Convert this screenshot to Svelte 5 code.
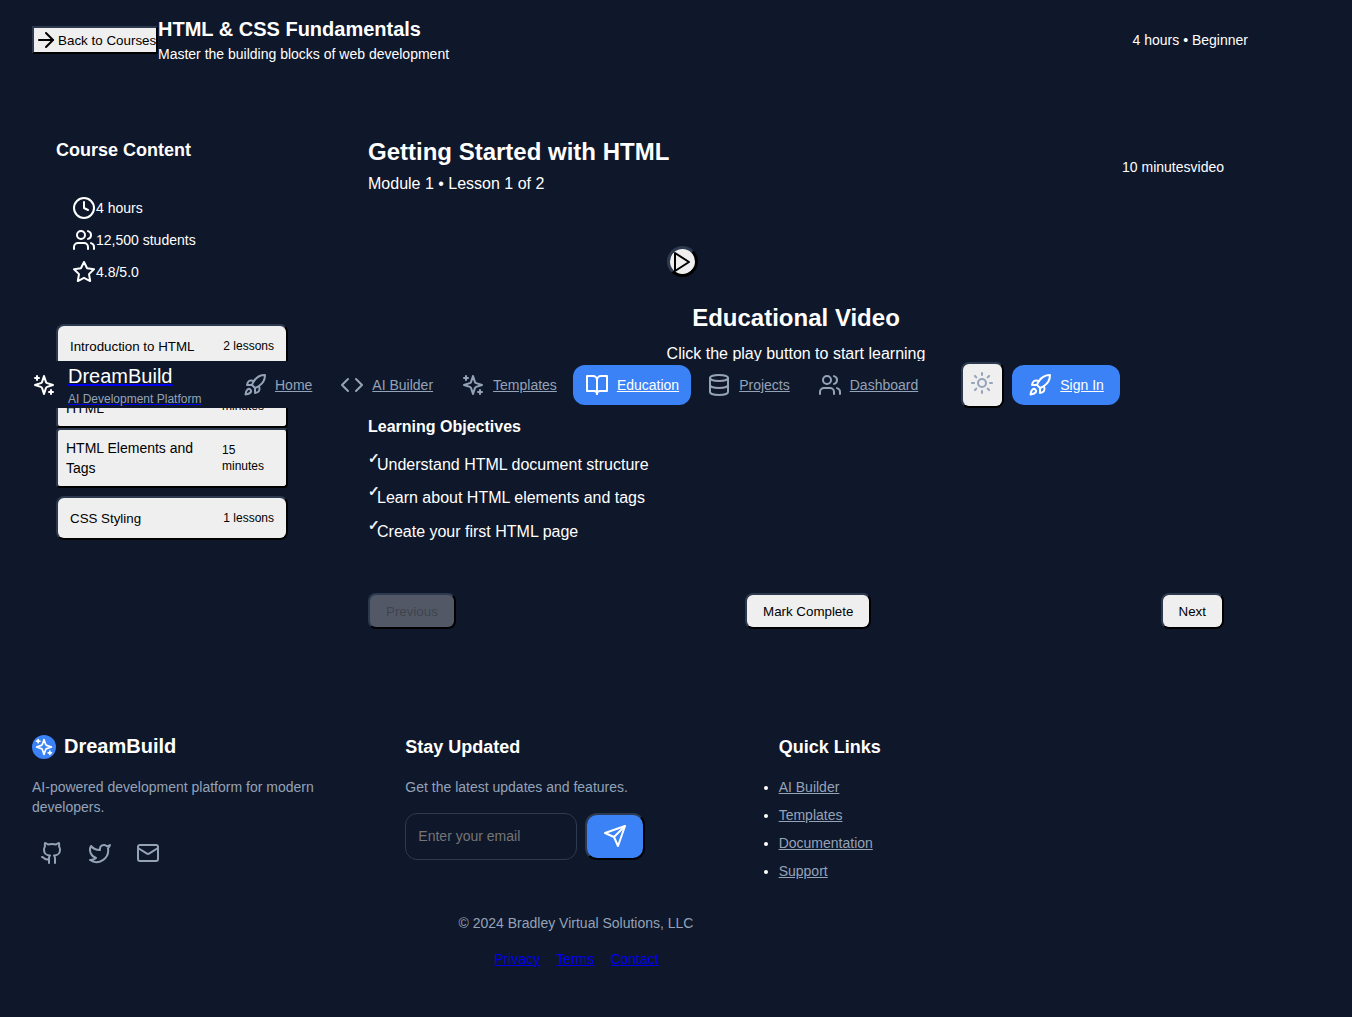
<script>
  const icons = {
    arrow: '<path d="M5 12h14"/><path d="m12 5 7 7-7 7"/>',
    clock: '<circle cx="12" cy="12" r="10"/><polyline points="12 6 12 12 16 14"/>',
    users: '<path d="M16 21v-2a4 4 0 0 0-4-4H6a4 4 0 0 0-4 4v2"/><circle cx="9" cy="7" r="4"/><path d="M22 21v-2a4 4 0 0 0-3-3.87"/><path d="M16 3.13a4 4 0 0 1 0 7.75"/>',
    star: '<polygon points="12 2 15.09 8.26 22 9.27 17 14.14 18.18 21.02 12 17.77 5.82 21.02 7 14.14 2 9.27 8.91 8.26 12 2"/>',
    sparkles: '<path d="m12 3-1.912 5.813a2 2 0 0 1-1.275 1.275L3 12l5.813 1.912a2 2 0 0 1 1.275 1.275L12 21l1.912-5.813a2 2 0 0 1 1.275-1.275L21 12l-5.813-1.912a2 2 0 0 1-1.275-1.275L12 3Z"/><path d="M5 3v4"/><path d="M19 17v4"/><path d="M3 5h4"/><path d="M17 19h4"/>',
    rocket: '<path d="M4.5 16.5c-1.5 1.26-2 5-2 5s3.74-.5 5-2c.71-.84.7-2.13-.09-2.91a2.18 2.18 0 0 0-2.91-.09z"/><path d="m12 15-3-3a22 22 0 0 1 2-3.95A12.88 12.88 0 0 1 22 2c0 2.72-.78 7.5-6 11a22.35 22.35 0 0 1-4 2z"/><path d="M9 12H4s.55-3.03 2-4c1.62-1.08 5 0 5 0"/><path d="M12 15v5s3.03-.55 4-2c1.08-1.62 0-5 0-5"/>',
    code: '<polyline points="16 18 22 12 16 6"/><polyline points="8 6 2 12 8 18"/>',
    book: '<path d="M2 3h6a4 4 0 0 1 4 4v14a3 3 0 0 0-3-3H2z"/><path d="M22 3h-6a4 4 0 0 0-4 4v14a3 3 0 0 1 3-3h7z"/>',
    database: '<ellipse cx="12" cy="5" rx="9" ry="3"/><path d="M3 5V19A9 3 0 0 0 21 19V5"/><path d="M3 12A9 3 0 0 0 21 12"/>',
    sun: '<circle cx="12" cy="12" r="4"/><path d="M12 2v2"/><path d="M12 20v2"/><path d="m4.93 4.93 1.41 1.41"/><path d="m17.66 17.66 1.41 1.41"/><path d="M2 12h2"/><path d="M20 12h2"/><path d="m6.34 17.66-1.41 1.41"/><path d="m19.07 4.93-1.41 1.41"/>',
    github: '<path d="M15 22v-4a4.8 4.8 0 0 0-1-3.5c3 0 6-2 6-5.5.08-1.25-.27-2.48-1-3.5.28-1.15.28-2.35 0-3.5 0 0-1 0-3 1.5-2.64-.5-5.36-.5-8 0C6 2 5 2 5 2c-.3 1.15-.3 2.35 0 3.5A5.403 5.403 0 0 0 4 9c0 3.5 3 5.5 6 5.5-.39.49-.68 1.05-.85 1.65-.17.6-.22 1.23-.15 1.85v4"/><path d="M9 18c-4.51 2-5-2-7-2"/>',
    twitter: '<path d="M22 4s-.7 2.1-2 3.4c1.6 10-9.4 17.3-18 11.6 2.2.1 4.4-.6 6-2C3 15.5.5 9.6 3 5c2.2 2.6 5.6 4.1 9 4-.9-4.2 4-6.6 7-3.8 1.1 0 3-1.2 3-1.2z"/>',
    mail: '<rect x="2" y="4" width="20" height="16" rx="2"/><path d="m22 7-8.97 5.7a1.94 1.94 0 0 1-2.06 0L2 7"/>',
    send: '<path d="m22 2-7 20-4-9-9-4Z"/><path d="M22 2 11 13"/>',
    play: '<polygon points="5 3 19 12 5 21 5 3"/>'
  };
  const stats = [
    { icon: 'clock', text: '4 hours' },
    { icon: 'users', text: '12,500 students' },
    { icon: 'star', text: '4.8/5.0' }
  ];
  const navItems = [
    { icon: 'rocket', label: 'Home' },
    { icon: 'code', label: 'AI Builder' },
    { icon: 'sparkles', label: 'Templates' },
    { icon: 'book', label: 'Education', active: true },
    { icon: 'database', label: 'Projects' },
    { icon: 'users', label: 'Dashboard' }
  ];
  const objectives = ['Understand HTML document structure', 'Learn about HTML elements and tags', 'Create your first HTML page'];
  const quick = ['AI Builder', 'Templates', 'Documentation', 'Support'];
</script>

{#snippet icon(name, size = 24)}
  <svg class="ico" width={size} height={size} viewBox="0 0 24 24" fill="none" stroke="currentColor" stroke-width="2" stroke-linecap="round" stroke-linejoin="round">{@html icons[name]}</svg>
{/snippet}

<div class="page">
  <header class="top">
    <button class="btn-plain back">{@render icon('arrow')}<span>Back to Courses</span></button>
    <div class="top-title">
      <h1>HTML &amp; CSS Fundamentals</h1>
      <p>Master the building blocks of web development</p>
    </div>
    <span class="top-meta">4 hours • Beginner</span>
  </header>

  <main class="layout">
    <aside class="side">
      <h2>Course Content</h2>
      <ul class="stats">
        {#each stats as s}
          <li>{@render icon(s.icon)}<span>{s.text}</span></li>
        {/each}
      </ul>
      <div class="modules">
        <div class="module-group">
          <button class="btn-plain module"><span>Introduction to HTML</span><small>2 lessons</small></button>
          <button class="btn-plain lesson"><span class="l-title">Getting Started with HTML</span><small class="l-dur">10 minutes</small></button>
          <button class="btn-plain lesson"><span class="l-title">HTML Elements and Tags</span><small class="l-dur">15 minutes</small></button>
        </div>
        <button class="btn-plain module"><span>CSS Styling</span><small>1 lessons</small></button>
      </div>
    </aside>

    <section class="content">
      <div class="lesson-head">
        <div>
          <h2>Getting Started with HTML</h2>
          <p>Module 1 • Lesson 1 of 2</p>
        </div>
        <span class="lesson-meta">10 minutesvideo</span>
      </div>

      <div class="video">
        <button class="btn-plain play" aria-label="Play">{@render icon('play')}</button>
        <h3>Educational Video</h3>
        <p>Click the play button to start learning</p>
      </div>

      <h4>Learning Objectives</h4>
      <ul class="objectives">
        {#each objectives as o}
          <li><span class="tick">✓</span><span>{o}</span></li>
        {/each}
      </ul>

      <div class="pager">
        <button class="btn-plain pg" disabled>Previous</button>
        <button class="btn-plain pg">Mark Complete</button>
        <button class="btn-plain pg">Next</button>
      </div>
    </section>
  </main>

  <footer class="foot">
    <div class="foot-grid">
      <div>
        <div class="brand">
          <span class="brand-dot">{@render icon('sparkles', 20)}</span>
          <span class="brand-name">DreamBuild</span>
        </div>
        <p class="muted desc">AI-powered development platform for modern developers.</p>
        <div class="social">
          <span>{@render icon('github')}</span>
          <span>{@render icon('twitter')}</span>
          <span>{@render icon('mail')}</span>
        </div>
      </div>
      <div>
        <h5>Stay Updated</h5>
        <p class="muted news">Get the latest updates and features.</p>
        <form class="sub">
          <input type="email" placeholder="Enter your email" />
          <button class="btn-plain send" type="button" aria-label="Send">{@render icon('send')}</button>
        </form>
      </div>
      <div>
        <h5>Quick Links</h5>
        <ul class="quick">
          {#each quick as q}
            <li><a href="#top">{q}</a></li>
          {/each}
        </ul>
      </div>
    </div>
    <div class="legal">
      <p class="muted">© 2024 Bradley Virtual Solutions, LLC</p>
      <div class="legal-links">
        <a href="#top">Privacy</a>
        <a href="#top">Terms</a>
        <a href="#top">Contact</a>
      </div>
    </div>
  </footer>

  <nav class="nav">
    <div class="nav-brand">
      <span class="nav-star">{@render icon('sparkles')}</span>
      <a class="nav-logo" href="#top">
        <span class="nav-name">DreamBuild</span>
        <span class="nav-tag">AI Development Platform</span>
      </a>
    </div>
    <div class="nav-links">
      {#each navItems as n}
        <div class="nav-item" class:active={n.active}>
          {@render icon(n.icon)}
          <a href="#top">{n.label}</a>
        </div>
      {/each}
    </div>
    <div class="nav-actions">
      <button class="btn-plain theme" aria-label="Theme">{@render icon('sun')}</button>
      <div class="nav-item active signin">{@render icon('rocket')}<a href="#top">Sign In</a></div>
    </div>
  </nav>
</div>

<style>
  :global(body) {
    margin: 0;
    background: #0f172a;
  }
  .page {
    position: relative;
    height: 1017px;
    overflow: hidden;
    background: #0f172a;
    color: #fff;
    font-family: "Liberation Sans", Arial, sans-serif;
    font-size: 14px;
    line-height: 20px;
  }
  h1, h2, h3, h4, h5, p, ul { margin: 0; padding: 0; }
  ul { list-style: none; }
  .ico { display: block; flex: none; }

  .btn-plain {
    box-sizing: border-box;
    font-family: inherit;
    color: #000;
    background: #efefef;
    border-width: 2px;
    border-style: solid;
    border-color: #2c394e #000 #000 #2c394e;
    padding: 0;
  }

  .top {
    display: flex;
    align-items: flex-start;
    padding: 15px 104px 0 32px;
    height: 96px;
    box-sizing: border-box;
  }
  .back {
    display: flex;
    align-items: center;
    gap: 0;
    height: 28px;
    width: 126px;
    margin-top: 11px;
    font-size: 13.4px;
    white-space: nowrap;
  }
  .top-title h1 { font-size: 20px; line-height: 28px; }
  .top-title p { font-size: 14px; line-height: 22px; }
  .top-meta { margin-left: auto; margin-top: 15px; }

  .layout {
    display: grid;
    grid-template-columns: 280px 904px;
    gap: 32px;
    padding: 16px 32px 0;
  }
  .side { padding: 24px; }
  .side h2 { font-size: 18px; line-height: 28px; }
  .stats {
    display: flex;
    flex-direction: column;
    gap: 8px;
    margin-top: 32px;
    padding-left: 16px;
  }
  .stats li { display: flex; align-items: center; height: 24px; }
  .modules {
    display: flex;
    flex-direction: column;
    gap: 8px;
    margin-top: 40px;
    width: 232px;
  }
  .module-group { display: flex; flex-direction: column; }
  .module {
    display: flex;
    justify-content: space-between;
    align-items: center;
    height: 44px;
    padding: 0 12px;
    border-radius: 8px;
    font-size: 13.33px;
  }
  .module small { font-size: 12px; }
  .lesson {
    display: flex;
    align-items: center;
    justify-content: space-between;
    height: 60px;
    padding: 0 8px;
    border-radius: 4px;
    text-align: left;
    font-size: 14px;
  }
  .l-title { flex: 1; line-height: 20px; }
  .l-dur { width: 56px; flex: none; font-size: 12px; line-height: 16px; }

  .content { padding: 24px; }
  .lesson-head {
    display: flex;
    justify-content: space-between;
    align-items: center;
  }
  .lesson-head h2 { font-size: 24px; line-height: 32px; }
  .lesson-head p { font-size: 16px; line-height: 24px; margin-top: 4px; }
  .lesson-meta { margin-top: 2px; }

  .video {
    display: flex;
    flex-direction: column;
    align-items: flex-start;
    width: fit-content;
    margin: 50px auto 0;
    text-align: center;
  }
  .play {
    width: 31px;
    height: 31px;
    border-width: 3px;
    padding: 0.5px;
    border-radius: 50%;
  }
  .video h3 {
    align-self: center;
    font-size: 24px;
    line-height: 32px;
    margin-top: 25px;
  }
  .video p { font-size: 16px; line-height: 24px; margin-top: 8px; }

  .content h4 { font-size: 16px; line-height: 24px; margin-top: 49px; }
  .objectives { margin-top: 13px; display: flex; flex-direction: column; gap: 8.4px; }
  .objectives li { display: flex; font-size: 16px; line-height: 25px; }
  .tick {
    font-size: 14px;
    line-height: 12px;
    width: 9px;
    flex: none;
    font-family: "DejaVu Sans", sans-serif;
    -webkit-text-stroke: 0.4px #fff;
  }

  .pager {
    display: flex;
    justify-content: space-between;
    margin-top: 49px;
  }
  .pg {
    height: 36px;
    padding: 1px 16px 0;
    border-radius: 8px;
    font-size: 13.33px;
  }
  .pg:disabled {
    background: rgba(239, 239, 239, 0.3);
    color: rgba(16, 16, 16, 0.3);
  }

  .foot {
    position: absolute;
    left: 32px;
    top: 733px;
    width: 1088px;
  }
  .foot-grid {
    display: grid;
    grid-template-columns: repeat(3, 1fr);
    gap: 32px;
  }
  .muted { color: #94a3b8; font-size: 14px; line-height: 20px; }
  .brand { display: flex; align-items: center; gap: 8px; height: 28px; }
  .brand-dot {
    width: 24px;
    height: 24px;
    border-radius: 50%;
    background: #3b82f6;
    display: flex;
    align-items: center;
    justify-content: center;
  }
  .brand-name { font-size: 20px; font-weight: 700; line-height: 26px; margin-bottom: 2px; }
  .desc { margin-top: 16px; }
  .social { display: flex; gap: 8px; margin-top: 16px; color: #94a3b8; }
  .social span { padding: 8px; }
  h5 { font-size: 18px; line-height: 28px; }
  .news { margin-top: 16px; }
  .sub { display: flex; gap: 8px; margin-top: 16px; }
  .sub input {
    box-sizing: border-box;
    width: 172px;
    height: 47px;
    padding: 0 12px 2px;
    border: 1px solid #2e3a4f;
    border-radius: 12px;
    background: transparent;
    color: #fff;
    font: 14px "Liberation Sans", Arial, sans-serif;
  }
  .sub input::placeholder { color: #757575; }
  .send {
    width: 60px;
    height: 47px;
    padding-bottom: 2px;
    border-radius: 12px;
    background: #3b82f6;
    color: #fff;
    display: flex;
    align-items: center;
    justify-content: center;
  }
  .quick { margin-top: 16px; display: flex; flex-direction: column; gap: 8px; list-style: disc; padding-left: 0; }
  .quick li { color: #fff; }
  .quick a { color: #94a3b8; }

  .legal { margin-top: 32px; text-align: center; }
  .legal-links { display: flex; justify-content: center; gap: 16px; margin-top: 16px; padding-left: 1px; }
  .legal-links a { color: #0000ee; }

  .nav {
    position: absolute;
    left: 0;
    right: 0;
    top: 361px;
    height: 47px;
    box-sizing: border-box;
    padding-left: 32px;
    display: flex;
    align-items: center;
    background: #0f172a;
  }
  .nav-brand { display: flex; align-items: center; gap: 12px; width: 199px; flex: none; }
  .nav-logo { display: flex; flex-direction: column; color: #fff; text-decoration-color: #0000ee; }
  .nav-name { font-size: 20px; line-height: 28px; color: #fff; }
  .nav-tag { font-size: 12px; line-height: 16px; color: #94a3b8; margin-top: 1px; }
  .nav-name, .nav-tag { text-decoration: underline; text-decoration-color: #0000ee; }
  .nav-links { display: flex; gap: 4px; }
  .nav-item {
    display: flex;
    align-items: center;
    gap: 8px;
    height: 40px;
    padding: 0 12px;
    border-radius: 12px;
    color: #94a3b8;
  }
  .nav-item a { color: inherit; }
  .nav-item.active { background: #3b82f6; color: #fff; }
  .nav-actions { display: flex; align-items: center; gap: 8px; margin-left: 31px; }
  .theme {
    width: 43px;
    height: 46px;
    padding: 0 2px 4px 0;
    border-radius: 8px;
    color: #94a3b8;
    display: flex;
    align-items: center;
    justify-content: center;
  }
  .signin { padding: 0 16px; }
</style>
